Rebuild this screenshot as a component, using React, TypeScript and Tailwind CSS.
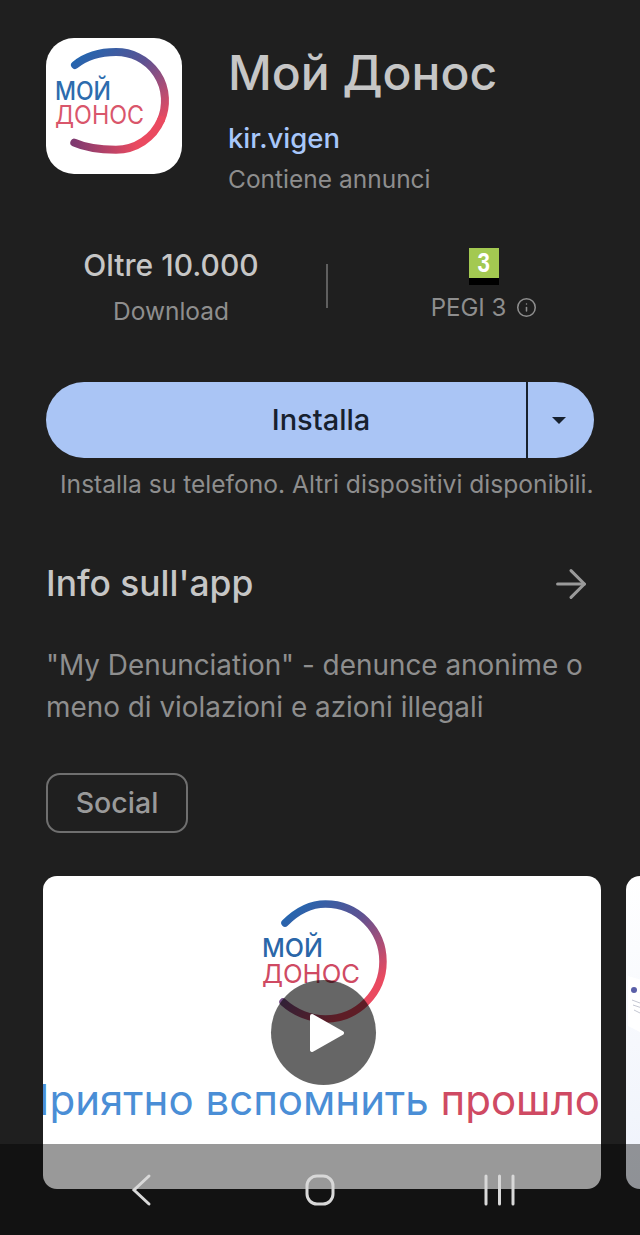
import React from 'react';
import { ArrowRight, Info } from 'lucide-react';

function AppIcon() {
  return (
    <svg width="136" height="136" viewBox="0 0 136 136" className="shrink-0">
      <defs>
        <linearGradient id="iconTop" gradientUnits="userSpaceOnUse" x1="40" y1="10" x2="110" y2="90">
          <stop offset="0" stopColor="#2266b0" />
          <stop offset="0.45" stopColor="#5d5292" />
          <stop offset="1" stopColor="#ea4a60" />
        </linearGradient>
        <linearGradient id="iconBottom" gradientUnits="userSpaceOnUse" x1="90" y1="100" x2="28" y2="105">
          <stop offset="0" stopColor="#ea4a60" />
          <stop offset="1" stopColor="#7f3a70" />
        </linearGradient>
      </defs>
      <path d="M29 27 C40 18 55 14 70 14 A48.700 48.700 0 0 1 115 82" fill="none" stroke="url(#iconTop)" strokeWidth="8" strokeLinecap="round" />
      <path d="M115 82 A49 49 0 0 1 70 111.700 C55 111.700 40 110 28.300 104.700" fill="none" stroke="url(#iconBottom)" strokeWidth="8" strokeLinecap="round" />
      <text x="9" y="62" fontSize="25" fontWeight="500" fill="#2d6cae" fontFamily="Inter, sans-serif" textLength="56" lengthAdjust="spacingAndGlyphs">МОЙ</text>
      <text x="9" y="86" fontSize="25" fontWeight="400" fill="#d9566b" fontFamily="Inter, sans-serif" textLength="89" lengthAdjust="spacingAndGlyphs">ДОНОС</text>
    </svg>
  );
}

function VideoLogo() {
  return (
    <svg width="130" height="128" viewBox="0 0 130 128" className="shrink-0">
      <defs>
        <linearGradient id="vidTop" gradientUnits="userSpaceOnUse" x1="40" y1="5" x2="115" y2="90">
          <stop offset="0" stopColor="#2266b0" />
          <stop offset="0.45" stopColor="#5d5292" />
          <stop offset="1" stopColor="#ea4a60" />
        </linearGradient>
      </defs>
      <path d="M28 25 C40 13 54 6 68.500 6 A57.500 57.500 0 0 1 68.500 121 C54 121 38 115 26 104" fill="none" stroke="url(#vidTop)" strokeWidth="7.500" strokeLinecap="round" />
      <text x="5" y="59" fontSize="26" fontWeight="500" fill="#2a66a8" fontFamily="Inter, sans-serif" textLength="61" lengthAdjust="spacingAndGlyphs">МОЙ</text>
      <text x="5" y="85" fontSize="26" fontWeight="400" fill="#cf4a63" fontFamily="Inter, sans-serif" textLength="98" lengthAdjust="spacingAndGlyphs">ДОНОС</text>
    </svg>
  );
}

export default function App() {
  return (
    <div className="relative h-[1235px] w-[640px] overflow-hidden bg-[#1f1f1f] font-['Inter',sans-serif]">
      <div className="px-[46px] pt-[38px]">
        <div className="flex gap-[46px]">
          <div className="h-[136px] w-[136px] shrink-0 overflow-hidden rounded-[28px] bg-white">
            <AppIcon />
          </div>
          <div className="flex flex-col">
            <h1 className="text-[48px] leading-[70px] font-medium whitespace-nowrap text-[#c6c6c6]">Мой Донос</h1>
            <span className="mt-[11px] text-[27.500px] leading-[38px] font-medium text-[#a8c7fa]">kir.vigen</span>
            <span className="mt-[1px] text-[24.500px] leading-[42px] text-[#8e8e8e]">Contiene annunci</span>
          </div>
        </div>

        <div className="mt-[45px] flex items-center">
          <div className="flex w-[250px] shrink-0 flex-col items-center">
            <span className="text-[30px] leading-[40px] font-medium text-[#c6c6c6]">Oltre 10.000</span>
            <span className="mt-[6px] text-[24.500px] leading-[40px] text-[#8e8e8e]">Download</span>
          </div>
          <div className="mb-[4px] ml-[30px] h-[44px] w-[2px] shrink-0 bg-[#5f5f5f]" />
          <div className="ml-[4px] flex w-[304px] shrink-0 flex-col items-center">
            <div className="flex h-[37px] w-[30px] flex-col">
              <div className="flex h-[30px] items-center justify-center bg-[#a3c951] font-['Liberation_Sans',sans-serif] text-[28px] font-bold text-white">
                <span className="inline-block scale-x-[0.8]">3</span>
              </div>
              <div className="h-[7px] bg-black" />
            </div>
            <div className="mt-[2px] flex items-center gap-[10px] text-[24px] leading-[42px] text-[#8e8e8e]">
              <span>PEGI 3</span>
              <Info size={21} strokeWidth={1.75} />
            </div>
          </div>
        </div>

        <div className="mt-[51px] flex h-[76px] w-[548px] items-stretch overflow-hidden rounded-full bg-[#aac5f5]">
          <div className="flex w-[480px] items-center justify-center pl-[70px] text-[29px] font-medium text-[#17212e]">Installa</div>
          <div className="w-[2px] bg-[#17212e]" />
          <div className="flex flex-1 items-center justify-center pr-[4px]">
            <div className="h-0 w-0 border-x-[7px] border-t-[7px] border-x-transparent border-t-[#17212e]" />
          </div>
        </div>
        <p className="mt-[6px] pl-[14px] text-[24.600px] leading-[40px] whitespace-nowrap text-[#8e8e8e]">
          Installa su telefono. Altri dispositivi disponibili.
        </p>

        <div className="mt-[53px] flex items-center justify-between">
          <h2 className="text-[35.400px] leading-[54px] font-medium text-[#c6c6c6]">Info sull'app</h2>
          <ArrowRight size={46} strokeWidth={1.6} className="text-[#9a9a9a]" />
        </div>
        <p className="mt-[33px] w-[560px] text-[27.900px] leading-[42px] text-[#8e8e8e]">
          "My Denunciation" - denunce anonime o<br />meno di violazioni e azioni illegali
        </p>
        <div className="mt-[45px] flex h-[60px] w-[142px] items-center justify-center rounded-[14px] border-2 border-[#6f6f6f] text-[28.500px] font-medium text-[#9a9a9a]">
          Social
        </div>
      </div>

      <div className="mt-[43px] ml-[43px] flex gap-[25px]">
        <div className="relative flex h-[313px] w-[558px] shrink-0 flex-col items-center overflow-hidden rounded-[14px] bg-white pt-[22px]">
          <VideoLogo />
          <div className="mt-[51px] flex w-full justify-end pr-[1px] text-[42px] leading-[46px] whitespace-nowrap text-[#4a8ed6]">
            <span className="shrink-0">Приятно вспомнить <span className="text-[#cf4a63]">прошло</span></span>
          </div>
          <div className="absolute top-[104px] left-[228px] flex h-[105px] w-[105px] items-center justify-center rounded-full bg-black/60">
            <svg width="36" height="40" viewBox="0 0 36 40" className="ml-[6px]">
              <path d="M3 3 L33 20 L3 37 Z" fill="#fff" stroke="#fff" strokeWidth="4" strokeLinejoin="round" />
            </svg>
          </div>
        </div>
        <div className="relative h-[313px] w-[558px] shrink-0 overflow-hidden rounded-[14px] bg-linear-to-b from-white to-[#eef2fb]">
          <svg width="20" height="70" viewBox="0 0 20 70" className="absolute top-[100px] left-[2px]">
            <path d="M0 0 L20 6 L20 60 L0 50 Z" fill="#ffffff" />
            <circle cx="6" cy="14" r="3" fill="#5a5fa8" />
            <path d="M4 24 L12 27 M5 29 L14 32 M6 34 L12 37" stroke="#c4c7d2" strokeWidth="1" />
          </svg>
        </div>
      </div>

      {/* system nav bar sits over the carousel */}
      <div className="absolute right-0 bottom-0 left-0 h-[91px] bg-black/40">
        <svg width="640" height="91" viewBox="0 0 640 91" fill="none" stroke="#d8d8d8" strokeWidth="3" strokeLinecap="round">
          <path d="M149 32 L134 46 L149 60" />
          <rect x="307" y="32" width="26" height="28" rx="10" />
          <path d="M486 32 V60 M499.500 32 V60 M513 32 V60" />
        </svg>
      </div>
    </div>
  );
}
